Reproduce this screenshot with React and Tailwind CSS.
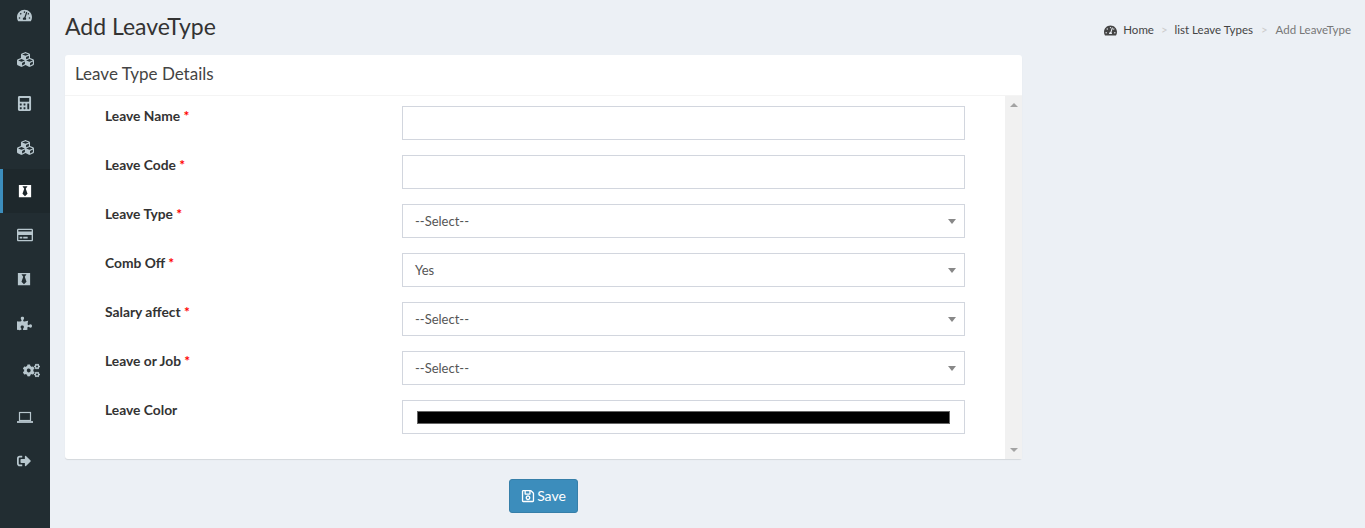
import React from 'react'
import { FaTachometerAlt, FaCubes, FaCalculator, FaBlackTie, FaRegCreditCard, FaPuzzlePiece, FaCogs, FaSignOutAlt, FaRegSave } from 'react-icons/fa'

// outline laptop, the package one is filled
const LaptopIcon = ({ size }) => (
  <svg width={size} height={size} viewBox="0 0 16 16" fill="none" stroke="currentColor">
    <rect x="2.500" y="3.500" width="11" height="8" strokeWidth="1.200" />
    <path d="M0 13h16" strokeWidth="1.800" />
  </svg>
)

const menu = [
  { Icon: FaTachometerAlt, size: 15 },
  { Icon: FaCubes, size: 17 },
  { Icon: FaCalculator, size: 15 },
  { Icon: FaCubes, size: 17 },
  { Icon: FaBlackTie, size: 14, active: true },
  { Icon: FaRegCreditCard, size: 16 },
  { Icon: FaBlackTie, size: 14 },
  { Icon: FaPuzzlePiece, size: 15 },
  { Icon: FaCogs, size: 17, cogs: true },
  { Icon: LaptopIcon, size: 16 },
  { Icon: FaSignOutAlt, size: 14 },
]

const fields = [
  { label: 'Leave Name', required: true, type: 'text' },
  { label: 'Leave Code', required: true, type: 'text' },
  { label: 'Leave Type', required: true, type: 'select', value: '--Select--' },
  { label: 'Comb Off', required: true, type: 'select', value: 'Yes' },
  { label: 'Salary affect', required: true, type: 'select', value: '--Select--' },
  { label: 'Leave or Job', required: true, type: 'select', value: '--Select--' },
  { label: 'Leave Color', type: 'color' },
]

const Field = ({ f }) => (
  <div className="flex h-[49px]">
    <label className="w-[337px] pl-[40px] text-[13.8px] leading-[20px] font-bold text-[#333]">
      {f.label}
      {f.required && <span className="text-[#f00]"> *</span>}
    </label>
    <div className="w-[563px] h-[34px] border border-[#d2d6de] bg-white flex items-center px-[12px] text-[13px] text-[#555]">
      {f.type === 'select' && (
        <>
          <span className="flex-1 pt-[2px]">{f.value}</span>
          <svg width="8" height="5" viewBox="0 0 8 5" className="mr-[-4px]"><path d="M0 0h8L4 5z" fill="#888" /></svg>
        </>
      )}
      {f.type === 'color' && <div className="w-full h-[13px] mx-[2px] bg-black border border-[#666]"></div>}
    </div>
  </div>
)

const App = () => {
  return (
    <div className="flex h-[528px] overflow-hidden bg-[#ecf0f5] font-['Lato','Noto_Sans',sans-serif] text-[#333]">
      <div className="w-[50px] shrink-0 bg-[#222d32] overflow-hidden">
        <div className="mt-[-7px]">
          {menu.map((m, i) => (
            <div
              key={i}
              className={`flex items-center text-[#b8c7ce] ${m.cogs ? 'h-[50px] pl-[23px]' : 'h-[44px] pl-[17px]'} ${m.active ? 'bg-[#1e282c] border-l-[3px] border-[#3c8dbc] !pl-[15px] text-white' : ''}`}
            >
              <m.Icon size={m.size} />
            </div>
          ))}
        </div>
      </div>

      <div className="flex-1 pl-[15px] pr-[14px]">
        <div className="flex justify-between items-center h-[55px]">
          <h1 className="text-[23px] leading-none text-[#333] pb-[3px]">Add LeaveType</h1>
          <div className="flex items-center text-[11.5px] text-[#444] pt-[5px]">
            <FaTachometerAlt size={13} className="mr-[6px]" />
            <span>Home</span>
            <span className="text-[#ccc] px-[7px]">&gt;</span>
            <span>list Leave Types</span>
            <span className="text-[#ccc] px-[8px]">&gt;</span>
            <span className="text-[#777]">Add LeaveType</span>
          </div>
        </div>

        <div className="w-[957px] bg-white rounded-[3px] shadow-[0_1px_1px_rgba(0,0,0,0.1)]">
          <div className="h-[41px] border-b border-[#f4f4f4] pl-[10px] pb-[3px] flex items-center text-[17px] text-[#444]">Leave Type Details</div>
          <div className="flex h-[363px]">
            <div className="flex-1 pt-[10px]">
              {fields.map((f) => <Field key={f.label} f={f} />)}
            </div>
            <div className="w-[17px] bg-[#f1f1f1] flex flex-col items-center justify-between py-[7px]">
              <svg width="8" height="4" viewBox="0 0 8 4"><path d="M4 0l4 4H0z" fill="#a3a3a3" /></svg>
              <svg width="8" height="4" viewBox="0 0 8 4"><path d="M0 0h8L4 4z" fill="#a3a3a3" /></svg>
            </div>
          </div>
        </div>

        <div className="w-[957px] flex pl-[444px] pt-[20px]">
          <button className="w-[69px] h-[34px] rounded-[3px] bg-[#3c8dbc] border border-[#367fa9] text-white text-[14px] pb-[2px] flex items-center justify-center gap-[2px]">
            <FaRegSave size={14} className="mt-[1px]" />
            Save
          </button>
        </div>
      </div>
    </div>
  )
}

export default App
